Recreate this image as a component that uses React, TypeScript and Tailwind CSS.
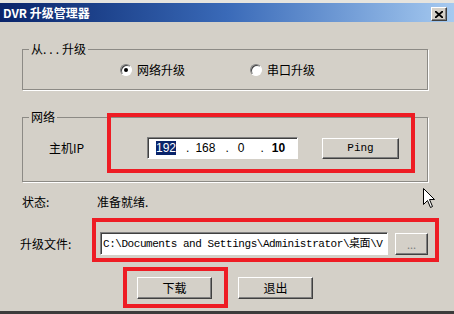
const cjk = "font-['Noto_Sans_CJK_SC','Noto_Sans',sans-serif]";
const mono = "font-['Liberation_Mono','Noto_Sans_CJK_SC',monospace]";

const raised =
  "border border-t-white border-l-white border-r-[#404040] border-b-[#404040] shadow-[inset_-1px_-1px_0_#808080] bg-[#d4d0c8]";
const sunken =
  "border border-t-[#808080] border-l-[#808080] border-r-white border-b-white shadow-[inset_1px_1px_0_#404040] bg-white";

const Radio = ({ checked }: { checked?: boolean }) => (
  <span className="flex h-3 w-3 items-center justify-center rounded-full border border-t-[#808080] border-l-[#808080] border-r-white border-b-white bg-white shadow-[inset_1px_1px_0_#404040]">
    {checked && <span className="h-1 w-1 rounded-full bg-black" />}
  </span>
);

const GroupBox = ({ label, className, children }) => (
  <fieldset className={"ml-[22px] w-[406px] border border-[#8c8a85] shadow-[1px_1px_0_#fff] " + className}>
    <legend className="ml-[6px] px-[2px] text-[12px] leading-[14px]">{label}</legend>
    {children}
  </fieldset>
);

export default function App() {
  return (
    <div className={"relative flex h-[314px] w-[454px] flex-col overflow-hidden border-t-[3px] border-b-[3px] border-t-[#e6e4de] border-b-[#3c3c3c] bg-[#d4d0c8] text-black " + cjk}>
      {/* title bar */}
      <div className="flex h-[19px] shrink-0 items-center justify-between bg-gradient-to-r from-[#0a246a] via-[#3a6ab8] to-[#a6caf0] pl-[3px] pr-[7px]">
        <span className="text-[12px] font-bold leading-[14px] text-white">DVR 升级管理器</span>
        <span className={"mt-[3px] flex h-[14px] w-[16px] items-center justify-center " + raised}>
          <svg width="8" height="7" viewBox="0 0 8 7">
            <path d="M0 0 L8 7 M8 0 L0 7" stroke="#000" strokeWidth="1.8" />
          </svg>
        </span>
      </div>

      <GroupBox label={<>从<span className="tracking-[3px]">...</span>升级</>} className="mt-[20px] pb-[12px] pt-[7px]">
        <div className="flex items-center pl-[97px] text-[12px] leading-[14px]">
          <Radio checked />
          <span className="ml-[5px]">网络升级</span>
          <span className="ml-[65px]">
            <Radio />
          </span>
          <span className="ml-[5px]">串口升级</span>
        </div>
      </GroupBox>

      <GroupBox label="网络" className="mt-[20px] pb-[22px] pt-[13px]">
        <div className="flex items-center pl-[26px] text-[12px]">
          <span className="w-[98px] leading-[14px]">主机IP</span>
          <div className={"flex h-[22px] w-[151px] items-center text-[12px] leading-[14px] font-['Liberation_Sans',sans-serif] " + sunken}>
            <span className="ml-[8px] bg-[#0a246a] text-white">192</span>
            <span className="ml-[10px]">.</span>
            <span className="ml-[6px]">168</span>
            <span className="ml-[10px]">.</span>
            <span className="ml-[9px]">0</span>
            <span className="ml-[16px]">.</span>
            <span className="ml-[8px] font-bold">10</span>
          </div>
          <button className={"ml-[24px] h-[21px] w-[77px] text-[11px] leading-[14px] " + mono + " " + raised}>Ping</button>
        </div>
      </GroupBox>

      <div className="ml-[22px] mt-[13px] flex text-[12px] leading-[14px]">
        <span className="w-[75px]">状态:</span>
        <span>准备就绪.</span>
      </div>

      <div className="ml-[20px] mt-[23px] flex items-center text-[12px] leading-[14px]">
        <span className="w-[80px]">升级文件:</span>
        <div className={"flex h-[23px] w-[288px] items-center overflow-hidden whitespace-nowrap pl-[2px] text-[11px] tracking-[-0.45px] " + mono + " " + sunken}>
          C:\Documents and Settings\Administrator\桌面\V
        </div>
        <button className={"ml-[7px] h-[22px] w-[33px] text-[11px] leading-[10px] text-[#808080] " + raised}>...</button>
      </div>

      <div className="ml-[137px] mt-[22px] flex gap-[26px] text-[12px] leading-[14px]">
        <button className={"h-[22px] w-[75px] " + raised}>下载</button>
        <button className={"h-[22px] w-[75px] " + raised}>退出</button>
      </div>

      {/* red annotation frames */}
      <div className="pointer-events-none absolute left-[107px] top-[110px] h-[60px] w-[308px] border-4 border-[#ee1c24]" />
      <div className="pointer-events-none absolute left-[92px] top-[215px] h-[44px] w-[347px] border-4 border-[#ee1c24]" />
      <div className="pointer-events-none absolute left-[123px] top-[264px] h-[41px] w-[105px] border-4 border-[#ee1c24]" />

      {/* mouse pointer */}
      <svg className="absolute left-[423px] top-[185px]" width="13" height="21" viewBox="0 0 13 21">
        <path d="M0.5 0.5 L0.5 16.5 L4.5 12.5 L7.5 19.5 L9.5 18.5 L6.5 11.5 L11.5 11.5 Z" fill="#fff" stroke="#000" strokeWidth="1" />
      </svg>
    </div>
  );
}
